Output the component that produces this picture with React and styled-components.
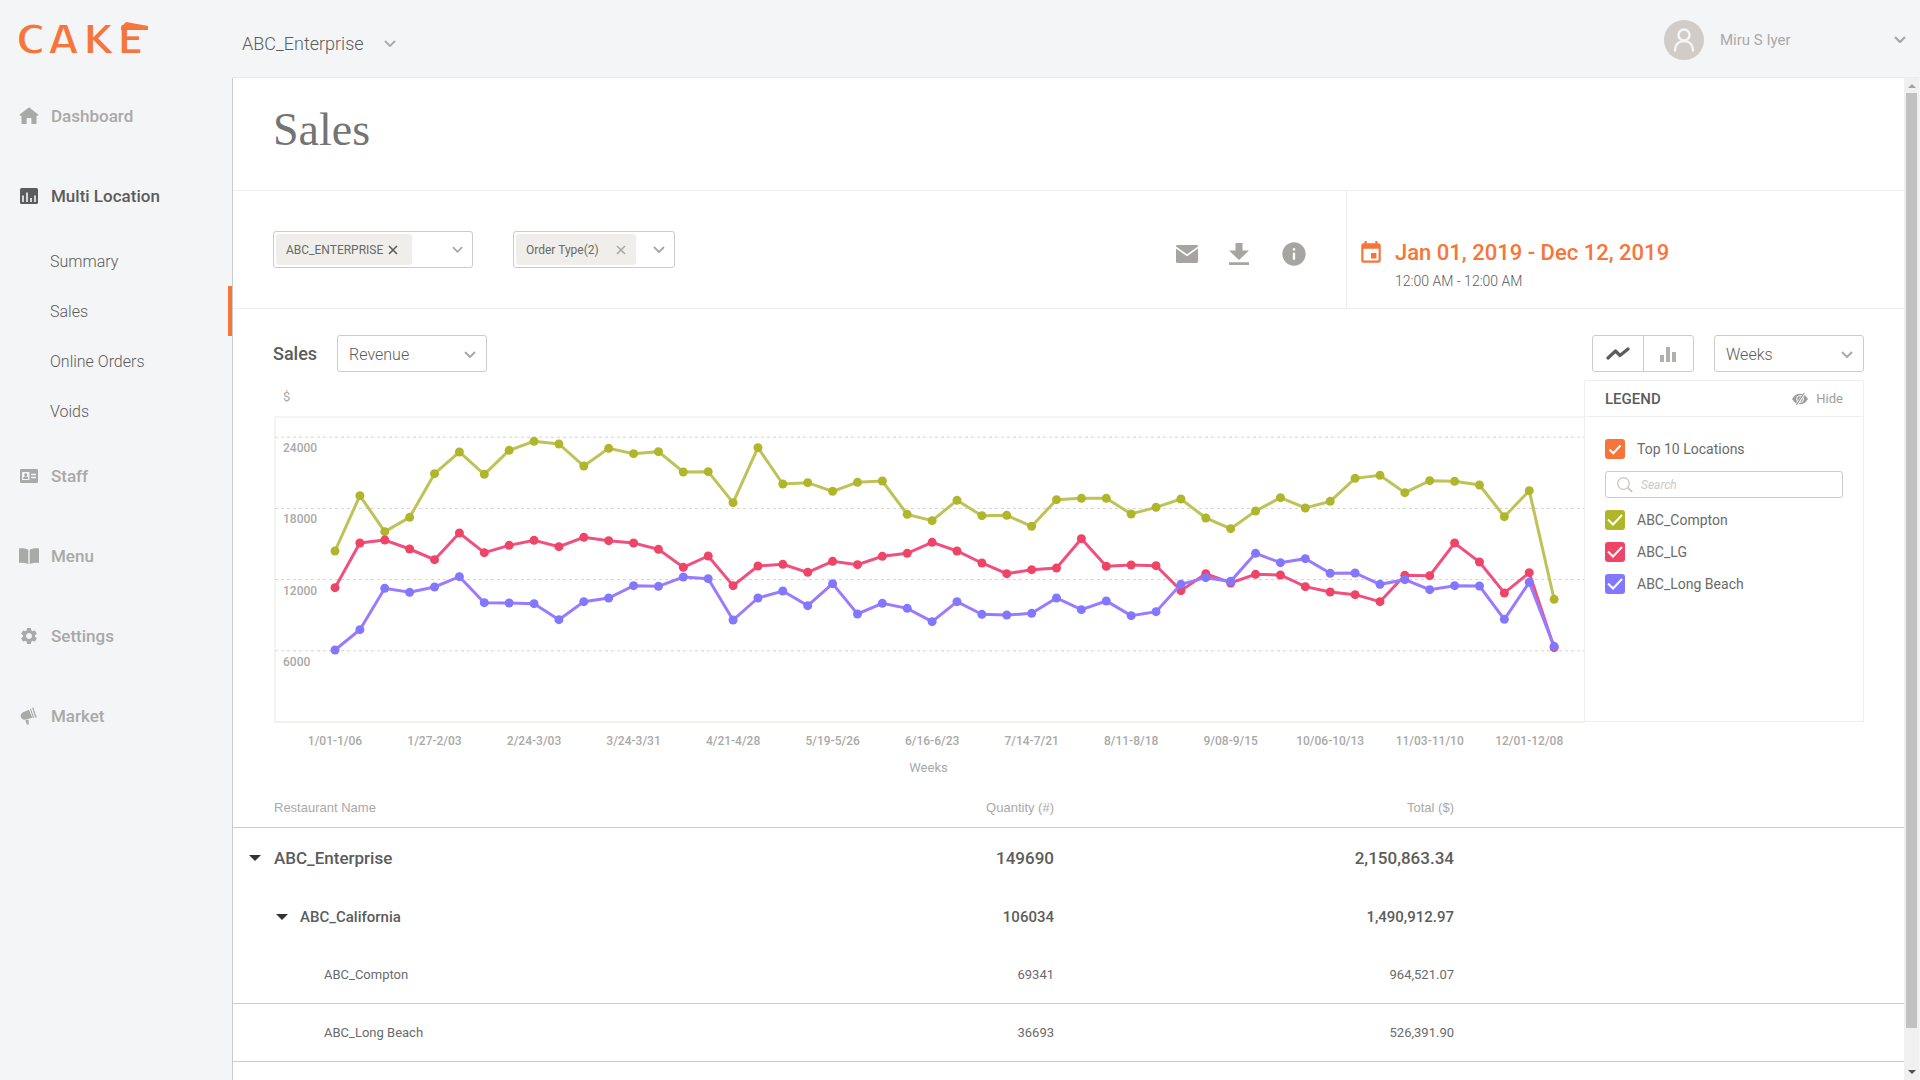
import React from "react";
import styled, { createGlobalStyle } from "styled-components";
import { MdEvent, MdInfo, MdSettings } from "react-icons/md";

const color = {
  orange: "#f7743a",
  canvas: "#f3f5f7",
  ink: "#5c5c5c",
  text: "#6a6a6a",
  muted: "#a9a9a7",
  line: "#eeeeec",
  rule: "#cccccc",
  control: "#cfcbc8",
  tag: "#efeeea",
  olive: "#b0b62c",
  pink: "#ee4566",
  violet: "#8278ff",
};

const GlobalStyle = createGlobalStyle`
  *, *::before, *::after { box-sizing: border-box; }
  body {
    margin: 0;
    background: ${color.canvas};
    color: ${color.text};
    font-family: Roboto, "Liberation Sans", sans-serif;
    font-size: 14px;
  }
  button, input, select { font: inherit; color: inherit; }
  button { border: 0; padding: 0; background: none; cursor: pointer; }
  svg { display: block; flex: none; }
`;

/* ---------- shell ---------- */

const Shell = styled.div`
  display: grid;
  grid-template-columns: 232px minmax(0, 1fr);
  height: 100vh;
  overflow: hidden;
`;

const Sidebar = styled.aside`
  display: flex;
  flex-direction: column;
`;

const LogoLink = styled.a`
  display: block;
  height: 76px;
  padding: 18px 0 0 16px;
`;

const Column = styled.div`
  display: flex;
  flex-direction: column;
  min-width: 0;
  min-height: 0;
`;

const TopBar = styled.header`
  display: flex;
  justify-content: space-between;
  flex: none;
  height: 78px;
  border-bottom: 1px solid #e9ebec;
`;

const AccountButton = styled.button`
  display: flex;
  align-items: center;
  gap: 20px;
  margin: 10px 0 0 10px;
  font-size: 18px;
  font-weight: 300;
  color: ${color.ink};
`;

const UserButton = styled.button`
  display: flex;
  align-items: center;
  gap: 16px;
  width: 256px;
  padding: 2px 14px 0 0;
  font-size: 15px;
  color: ${color.muted};

  & > svg:last-child { margin-left: auto; }
`;

const Viewport = styled.div`
  display: flex;
  flex: 1;
  min-height: 0;
  padding-right: 1px;
`;

const Content = styled.main`
  flex: 1;
  min-width: 0;
  overflow: hidden;
  background: #fff;
  border-left: 1px solid ${color.rule};
`;

const ScrollTrack = styled.div`
  display: flex;
  flex-direction: column;
  align-items: center;
  justify-content: space-between;
  width: 15px;
  padding: 6px 0;
  background: #f0f0f0;
`;

const ScrollThumb = styled.div`
  flex: 1;
  width: 11px;
  margin: 5px 0 42px;
  background: #c1c1c1;
`;

/* ---------- navigation ---------- */

const NavList = styled.ul`
  margin: 0;
  padding: 0;
  list-style: none;
`;

const NavLink = styled.a`
  display: flex;
  align-items: center;
  gap: 12px;
  height: 80px;
  padding-left: 19px;
  font-size: 17px;
  font-weight: 500;
  text-decoration: none;
  color: ${(p) => (p.$active ? color.ink : color.muted)};
`;

const SubLink = styled.a`
  display: flex;
  align-items: center;
  height: 50px;
  padding-left: 50px;
  border-right: 4px solid ${(p) => (p.$active ? color.orange : "transparent")};
  font-size: 16px;
  font-weight: 300;
  text-decoration: none;
  color: ${color.ink};
`;

/* ---------- page head ---------- */

const TitleBand = styled.div`
  height: 113px;
  padding: 25px 40px 0;
  border-bottom: 1px solid ${color.line};
`;

const PageTitle = styled.h1`
  margin: 0;
  font: 400 46px/54px "Liberation Serif", serif;
  color: #747474;
`;

const FilterBand = styled.div`
  display: flex;
  height: 118px;
  border-bottom: 1px solid ${color.line};
`;

const Filters = styled.div`
  display: flex;
  flex: 1;
  gap: 40px;
  padding: 40px 0 0 40px;
`;

const TagSelect = styled.div`
  display: flex;
  align-items: center;
  justify-content: space-between;
  width: ${(p) => p.$width}px;
  height: 37px;
  padding: 0 9px 0 2px;
  border: 1px solid ${color.control};
  border-radius: 3px;
`;

const Tag = styled.span`
  display: flex;
  align-items: center;
  justify-content: ${(p) => (p.$spread ? "space-between" : "flex-start")};
  gap: 5px;
  width: ${(p) => p.$width}px;
  height: 31px;
  padding: 0 10px;
  border-radius: 3px;
  background: ${color.tag};
  font-size: 12px;
`;

const Actions = styled.div`
  display: flex;
  align-items: center;
  gap: 30px;
  padding: 8px 38px 0 0;
  color: #a6a5a1;
`;

const DatePanel = styled.button`
  display: grid;
  grid-template-columns: 24px auto;
  align-content: start;
  justify-content: start;
  align-items: center;
  column-gap: 13px;
  width: 558px;
  padding: 47px 0 0 11px;
  border-left: 1px solid ${color.line};
  text-align: left;
`;

const DateRange = styled.span`
  font-size: 22px;
  font-weight: 500;
  line-height: 30px;
  color: ${color.orange};
`;

const TimeRange = styled.span`
  grid-column: 2;
  font-size: 14px;
  font-weight: 300;
  line-height: 26px;
  color: ${color.ink};
`;

/* ---------- chart ---------- */

const ChartSection = styled.section`
  padding: 26px 40px 0;
`;

const ChartBar = styled.div`
  display: flex;
  align-items: center;
  gap: 20px;
  height: 37px;
`;

const ChartTitle = styled.h2`
  margin: 0;
  font-size: 18px;
  font-weight: 500;
  color: ${color.ink};
`;

const SelectBox = styled.div`
  position: relative;
  width: 150px;

  svg {
    position: absolute;
    top: 16px;
    right: 11px;
    pointer-events: none;
  }
`;

const Select = styled.select`
  display: block;
  width: 100%;
  height: 37px;
  padding: 1px 32px 0 11px;
  border: 1px solid ${color.control};
  border-radius: 3px;
  background: #fff;
  font-size: 16px;
  font-weight: 300;
  color: ${color.ink};
  appearance: none;
`;

const ToggleGroup = styled.div`
  display: flex;
  width: 102px;
  height: 37px;
  margin-left: auto;
  border: 1px solid ${color.control};
  border-radius: 3px;
`;

const Toggle = styled.button`
  display: flex;
  flex: 1;
  align-items: center;
  justify-content: center;
  color: ${(p) => (p.$active ? color.ink : "#b0b0ae")};

  & + & { border-left: 1px solid ${color.control}; }
`;

const ChartBody = styled.div`
  display: grid;
  grid-template-columns: minmax(0, 1fr) 280px;
  align-items: start;
  padding-top: 8px;
`;

const Unit = styled.div`
  padding-left: 10px;
  font-size: 13px;
  line-height: 34px;
  height: 36px;
  color: ${color.muted};
`;

const Plot = styled.svg`
  width: 100%;
  height: auto;

  text {
    font-size: 12px;
    font-weight: 500;
    fill: ${color.muted};
  }
`;

const AxisTitle = styled.div`
  font-size: 13px;
  line-height: 24px;
  text-align: center;
  color: ${color.muted};
`;

const Legend = styled.aside`
  min-height: 342px;
  border: 1px solid ${color.line};
`;

const LegendHead = styled.div`
  display: flex;
  align-items: center;
  justify-content: space-between;
  height: 36px;
  padding: 0 20px;
  border-bottom: 1px solid ${color.line};
`;

const LegendTitle = styled.h3`
  margin: 0;
  font-size: 15px;
  font-weight: 500;
  color: ${color.ink};
`;

const HideButton = styled.button`
  display: flex;
  align-items: center;
  gap: 8px;
  font-size: 13px;
  color: #9d9d9b;
`;

const LegendBody = styled.div`
  display: flex;
  flex-direction: column;
  gap: 12px;
  padding: 22px 20px;
`;

const CheckLabel = styled.label`
  position: relative;
  display: flex;
  align-items: center;
  gap: 12px;
  height: 20px;
  font-size: 14px;

  svg {
    position: absolute;
    left: 0;
    pointer-events: none;
  }
`;

const CheckInput = styled.input`
  width: 20px;
  height: 20px;
  margin: 0;
  border-radius: 3px;
  background: ${(p) => p.$tint};
  appearance: none;
`;

const SearchBox = styled.label`
  display: flex;
  align-items: center;
  gap: 8px;
  height: 27px;
  padding-left: 11px;
  border: 1px solid ${color.control};
  border-radius: 3px;
`;

const SearchInput = styled.input`
  flex: 1;
  min-width: 0;
  padding: 0;
  border: 0;
  outline: 0;
  background: none;
  font-size: 12px;

  &::placeholder { font-style: italic; color: #cdc9c6; opacity: 1; }
`;

/* ---------- table ---------- */

const Table = styled.table`
  width: 100%;
  margin-top: 8px;
  border-collapse: separate;
  border-spacing: 0;
  table-layout: fixed;
`;

const HeadCell = styled.th`
  width: ${(p) => (p.$width ? `${p.$width}px` : "auto")};
  height: 40px;
  padding: ${(p) => (p.$numeric ? 0 : "0 0 0 41px")};
  border-bottom: 1px solid ${color.rule};
  font: 400 13px "Liberation Sans", sans-serif;
  text-align: ${(p) => (p.$numeric ? "right" : "left")};
  color: ${color.muted};
`;

const rowFont = [
  { size: 17, weight: 500, height: 59, inset: 16 },
  { size: 15, weight: 500, height: 59, inset: 43 },
  { size: 13, weight: 400, height: 58, inset: 91 },
];

const Cell = styled.td`
  height: ${(p) => rowFont[p.$level].height}px;
  padding: 0;
  border-bottom: ${(p) => (p.$level === 2 ? `1px solid ${color.rule}` : 0)};
  font-size: ${(p) => rowFont[p.$level].size}px;
  font-weight: ${(p) => rowFont[p.$level].weight};
  text-align: right;
  color: ${(p) => (p.$level === 2 ? color.text : color.ink)};
`;

const NameCell = styled(Cell)`
  padding-left: ${(p) => rowFont[p.$level].inset}px;
  text-align: left;
`;

const Expander = styled.button`
  display: flex;
  align-items: center;
  gap: ${(p) => (p.$level === 0 ? 13 : 12)}px;
`;

const IconButton = styled.button`
  display: flex;
  align-items: center;
`;

/* ---------- icons ---------- */

const Chevron = ({ stroke = 2, width = 12 }) => (
  <svg width={width} height="7" viewBox="0 0 12 7" fill="none" stroke={color.muted} strokeWidth={stroke}>
    <path d="M1 1l5 5 5-5" />
  </svg>
);

const Cross = ({ tint, size }) => (
  <svg width={size} height={size} viewBox="0 0 10 10" stroke={tint} strokeWidth="1.6">
    <path d="M1 1l8 8M9 1l-8 8" />
  </svg>
);

const Caret = ({ tint = "#333", up = false, width = 12 }) => (
  <svg width={width} height={width / 2} viewBox="0 0 12 6" fill={tint}>
    <path d={up ? "M0 6L6 0l6 6z" : "M0 0h12L6 6z"} />
  </svg>
);

const Logo = () => (
  <svg width="140" height="44" viewBox="0 0 140 44" role="img" aria-label="CAKE" fill={color.orange}>
    <text
      x="0 32 67 101"
      y="36"
      fontFamily="DejaVu Sans, sans-serif"
      fontWeight="700"
      fontSize="40"
      stroke={color.canvas}
      strokeWidth="2"
    >
      CAKE
    </text>
    <path d="M105 9l5-5 22 4v4h-27z" />
  </svg>
);

const HomeIcon = () => (
  <svg width="20" height="20" viewBox="0 0 20 20" fill="currentColor">
    <path d="M10 1.2L.8 8.6c-.5.5-.2 1.2.5 1.2h1.2v7.4c0 .6.3.9.9.9h4.2v-5.3c0-.5.3-.8.8-.8h3.200c.5 0 .8.3.8.8v5.300h4.200c.6 0 .9-.3.9-.9V9.800h1.200c.7 0 1-.7.5-1.200z" />
  </svg>
);

const ReportIcon = () => (
  <svg width="20" height="20" viewBox="0 0 20 20">
    <rect x="1" y="2" width="18" height="16" rx="1.500" fill="currentColor" />
    <path d="M4 9.500V16M8 6.500V16M12 12v4M16 9.500V16" stroke={color.canvas} strokeWidth="1.600" />
  </svg>
);

const StaffIcon = () => (
  <svg width="20" height="20" viewBox="0 0 20 20">
    <rect x="1" y="3" width="18" height="14" rx="1" fill="currentColor" />
    <rect x="3" y="6" width="7.500" height="8" fill={color.canvas} />
    <circle cx="6.700" cy="8.800" r="1.500" fill="currentColor" />
    <path d="M4 13c0-2 1.200-2.400 2.700-2.400S9.400 11 9.400 13z" fill="currentColor" />
    <path d="M12 8.500h5M12 11.500h5" stroke={color.canvas} strokeWidth="1.400" />
  </svg>
);

const MenuIcon = () => (
  <svg width="20" height="20" viewBox="0 0 20 20" fill="currentColor">
    <path d="M0 2.500c3-.4 6-.2 9.300 1.200V18C6 16.900 3 16.700 0 17zM20 2.500c-3-.4-6-.2-9.300 1.200V18c3.300-1.100 6.300-1.300 9.300-1z" />
  </svg>
);

const MarketIcon = () => (
  <svg width="20" height="20" viewBox="0 0 20 20" fill="currentColor">
    <path d="M10 3.800L4.600 6C2 7 1.200 9.100 2 11.300c.8 2.100 2.600 2.900 5 2.100l6.300-1.700z" />
    <path d="M11 3.200l1-.5 3.200 9-1.200.2zM13.200 2l1-.8 3.600 10.400-1.500-.2z" />
    <path d="M6.300 14.400l3.200-.8.4 4.600-1.900.5z" />
  </svg>
);

const MailIcon = () => (
  <svg width="22" height="18" viewBox="0 0 22 18" fill="currentColor">
    <path d="M1.500 0h19c.8 0 1.500.6 1.500 1.400L11 9.200 0 1.400C0 .6.700 0 1.500 0z" />
    <path d="M0 3.600l11 7.700 11-7.700v12.900c0 .8-.7 1.500-1.500 1.500h-19C.7 18 0 17.300 0 16.500z" />
  </svg>
);

const DownloadIcon = () => (
  <svg width="22" height="22" viewBox="-1 0 22 22" fill="currentColor">
    <path d="M6.500 0h7v7.500H20L10 17 0 7.500h6.500zM0 19.200h20V22H0z" />
  </svg>
);

const LineIcon = () => (
  <svg width="24" height="13" viewBox="0 0 24 13" fill="none" stroke="currentColor" strokeWidth="3.200" strokeLinejoin="round" strokeLinecap="round">
    <path d="M2 11l7.500-7L14 8.500 22 2" />
  </svg>
);

const BarsIcon = () => (
  <svg width="16" height="16" viewBox="0 0 16 16" fill="currentColor">
    <path d="M0 9h4v7H0zM6 1h4v15H6zM12 6h4v10h-4z" />
  </svg>
);

const HideIcon = () => (
  <svg width="16" height="12" viewBox="0 0 16 12">
    <path d="M0 6c2-3.600 4.800-5.300 8-5.300S14 2.400 16 6c-2 3.600-4.800 5.300-8 5.300S2 9.600 0 6z" fill="currentColor" />
    <circle cx="8" cy="6" r="3.400" fill="none" stroke="#fff" strokeWidth="1" />
    <path d="M12.500 0L4.500 12" stroke="#fff" strokeWidth="2.600" />
    <path d="M12.200 0L4.200 12" stroke="currentColor" strokeWidth="1.300" />
  </svg>
);

const SearchIcon = () => (
  <svg width="16" height="16" viewBox="0 0 16 16" fill="none" stroke="#c9c5c2" strokeWidth="1.300">
    <circle cx="6.500" cy="6.500" r="5.800" />
    <path d="M10.800 10.800l4.400 4" strokeWidth="1.800" />
  </svg>
);

const CheckMark = ({ small }) => (
  <svg width="20" height="20" viewBox="0 0 20 20" fill="none" stroke="#fff" strokeWidth="2">
    <path d={small ? "M4.500 10.500l3.800 3.800L15.500 6.500" : "M3 9.500l5 5L17 5"} />
  </svg>
);

const Avatar = () => (
  <svg width="40" height="40" viewBox="0 0 40 40" fill="none" stroke={color.canvas} strokeWidth="2.400" strokeLinecap="round">
    <circle cx="20" cy="20" r="20" fill="#d2ccc8" stroke="none" />
    <circle cx="20" cy="15" r="5.500" />
    <path d="M11 30.500c0-6 4-9.500 9-9.500s9 3.500 9 9.500" />
  </svg>
);

/* ---------- data ---------- */

// Point heights above the zero line, three units to one plot pixel.
const SERIES = [
  {
    name: "ABC_Compton",
    tint: color.olive,
    line: "#bec257",
    points: [513, 679, 571, 614, 745, 810, 743, 815, 842, 834, 768, 821, 805, 811, 750, 751, 658, 823, 714, 718, 692, 719, 723, 623, 604, 665, 619, 620, 587, 667, 671, 671, 624, 644, 669, 612, 580, 633, 673, 642, 662, 731, 740, 688, 724, 722, 711, 616, 694, 368],
  },
  {
    name: "ABC_LG",
    tint: color.pink,
    line: "#f0507f",
    points: [403, 537, 546, 519, 487, 567, 508, 530, 545, 526, 554, 544, 537, 518, 464, 498, 409, 468, 473, 449, 482, 472, 497, 506, 539, 513, 477, 445, 457, 462, 550, 467, 471, 469, 394, 445, 417, 443, 441, 406, 390, 382, 361, 440, 439, 537, 480, 387, 448, 223],
  },
  {
    name: "ABC_Long Beach",
    tint: color.violet,
    line: "#9a7bff",
    points: [216, 277, 401, 389, 405, 436, 358, 357, 355, 307, 361, 372, 409, 407, 435, 430, 306, 372, 393, 349, 415, 324, 356, 341, 301, 361, 323, 321, 326, 372, 337, 363, 319, 331, 413, 433, 422, 506, 478, 490, 446, 447, 413, 427, 397, 409, 408, 308, 419, 227],
  },
];

const WEEKS = [
  "1/01-1/06", "1/27-2/03", "2/24-3/03", "3/24-3/31", "4/21-4/28", "5/19-5/26", "6/16-6/23",
  "7/14-7/21", "8/11-8/18", "9/08-9/15", "10/06-10/13", "11/03-11/10", "12/01-12/08",
];

const GRID = [24000, 18000, 12000, 6000];

const BASE = 306;
const px = (i) => 62 + i * 24.88;
const py = (h) => BASE - h / 3;
const gridY = (v) => BASE - (v / 6000) * 71.200;

const ROWS = [
  { name: "ABC_Enterprise", quantity: "149690", total: "2,150,863.34", level: 0 },
  { name: "ABC_California", quantity: "106034", total: "1,490,912.97", level: 1 },
  { name: "ABC_Compton", quantity: "69341", total: "964,521.07", level: 2 },
  { name: "ABC_Long Beach", quantity: "36693", total: "526,391.90", level: 2 },
];

const MAIN_NAV = [
  { label: "Dashboard", icon: <HomeIcon /> },
  { label: "Multi Location", icon: <ReportIcon />, children: ["Summary", "Sales", "Online Orders", "Voids"] },
  { label: "Staff", icon: <StaffIcon /> },
  { label: "Menu", icon: <MenuIcon /> },
  { label: "Settings", icon: <MdSettings size={20} /> },
  { label: "Market", icon: <MarketIcon /> },
];

/* ---------- parts ---------- */

const SalesPlot = () => (
  <Plot viewBox="0 0 1311 340" role="img" aria-label="Weekly revenue by location">
    <path d={`M2 ${BASE}V1H1311`} fill="none" stroke="#f4f4f2" strokeWidth="2" />
    <path d={`M1 ${BASE}H1311`} stroke="#f2f2ec" strokeWidth="2" />
    {GRID.map((v) => (
      <g key={v}>
        <path d={`M2 ${gridY(v)}H1311`} stroke="#d4d4d4" strokeDasharray="3 3" />
        <text x="10" y={gridY(v) + 15}>{v}</text>
      </g>
    ))}
    {SERIES.map((s) => (
      <g key={s.name}>
        <polyline
          points={s.points.map((h, i) => `${px(i)},${py(h)}`).join(" ")}
          fill="none"
          stroke={s.line}
          strokeWidth="3"
        />
        {s.points.map((h, i) => (
          <circle key={i} cx={px(i)} cy={py(h)} r="4.500" fill={s.tint} />
        ))}
      </g>
    ))}
    {WEEKS.map((w, i) => (
      <text key={w} x={px(i * 4)} y="329" textAnchor="middle">{w}</text>
    ))}
  </Plot>
);

const Dropdown = ({ label, options }) => (
  <SelectBox>
    <Select aria-label={label}>
      {options.map((o) => <option key={o}>{o}</option>)}
    </Select>
    <Chevron />
  </SelectBox>
);

const Check = ({ label, tint, small }) => (
  <CheckLabel>
    <CheckInput type="checkbox" defaultChecked $tint={tint} />
    <CheckMark small={small} />
    {label}
  </CheckLabel>
);

export default function App() {
  return (
    <>
      <GlobalStyle />
      <Shell>
        <Sidebar>
          <LogoLink href="#home"><Logo /></LogoLink>
          <nav>
            <NavList>
              {MAIN_NAV.map((item) => (
                <li key={item.label}>
                  <NavLink href="#nav" $active={!!item.children}>
                    {item.icon}
                    {item.label}
                  </NavLink>
                  {item.children && (
                    <NavList>
                      {item.children.map((c) => (
                        <li key={c}><SubLink href="#sub" $active={c === "Sales"}>{c}</SubLink></li>
                      ))}
                    </NavList>
                  )}
                </li>
              ))}
            </NavList>
          </nav>
        </Sidebar>

        <Column>
          <TopBar>
            <AccountButton>
              ABC_Enterprise
              <Chevron stroke={1.800} />
            </AccountButton>
            <UserButton>
              <Avatar />
              Miru S Iyer
              <Chevron stroke={2.400} />
            </UserButton>
          </TopBar>

          <Viewport>
            <Content>
              <TitleBand>
                <PageTitle>Sales</PageTitle>
              </TitleBand>

              <FilterBand>
                <Filters>
                  <TagSelect $width={200}>
                    <Tag $width={136}>
                      ABC_ENTERPRISE
                      <IconButton aria-label="Remove location"><Cross tint="#5c5c5c" size={10} /></IconButton>
                    </Tag>
                    <IconButton aria-label="Choose location"><Chevron width={11} /></IconButton>
                  </TagSelect>
                  <TagSelect $width={162}>
                    <Tag $width={120} $spread>
                      Order Type(2)
                      <IconButton aria-label="Clear order types"><Cross tint="#a9a9a7" size={10} /></IconButton>
                    </Tag>
                    <IconButton aria-label="Choose order types"><Chevron /></IconButton>
                  </TagSelect>
                </Filters>
                <Actions>
                  <IconButton aria-label="Email"><MailIcon /></IconButton>
                  <IconButton aria-label="Download"><DownloadIcon /></IconButton>
                  <IconButton aria-label="Information"><MdInfo size={28} /></IconButton>
                </Actions>
                <DatePanel>
                  <MdEvent size={26} color={color.orange} />
                  <DateRange>Jan 01, 2019 - Dec 12, 2019</DateRange>
                  <TimeRange>12:00 AM - 12:00 AM</TimeRange>
                </DatePanel>
              </FilterBand>

              <ChartSection>
                <ChartBar>
                  <ChartTitle>Sales</ChartTitle>
                  <Dropdown label="Measure" options={["Revenue", "Quantity"]} />
                  <ToggleGroup>
                    <Toggle $active aria-label="Line chart"><LineIcon /></Toggle>
                    <Toggle aria-label="Bar chart"><BarsIcon /></Toggle>
                  </ToggleGroup>
                  <Dropdown label="Period" options={["Weeks", "Months"]} />
                </ChartBar>

                <ChartBody>
                  <div>
                    <Unit>$</Unit>
                    <SalesPlot />
                    <AxisTitle>Weeks</AxisTitle>
                  </div>
                  <Legend>
                    <LegendHead>
                      <LegendTitle>LEGEND</LegendTitle>
                      <HideButton><HideIcon />Hide</HideButton>
                    </LegendHead>
                    <LegendBody>
                      <Check label="Top 10 Locations" tint={color.orange} small />
                      <SearchBox>
                        <SearchIcon />
                        <SearchInput type="search" placeholder="Search" aria-label="Search locations" />
                      </SearchBox>
                      {SERIES.map((s) => <Check key={s.name} label={s.name} tint={s.tint} />)}
                    </LegendBody>
                  </Legend>
                </ChartBody>
              </ChartSection>

              <Table>
                <thead>
                  <tr>
                    <HeadCell $width={421}>Restaurant Name</HeadCell>
                    <HeadCell $width={400} $numeric>Quantity (#)</HeadCell>
                    <HeadCell $width={400} $numeric>Total ($)</HeadCell>
                    <HeadCell aria-hidden="true" />
                  </tr>
                </thead>
                <tbody>
                  {ROWS.map((r) => (
                    <tr key={r.name}>
                      <NameCell $level={r.level}>
                        {r.level < 2 ? (
                          <Expander $level={r.level}><Caret />{r.name}</Expander>
                        ) : r.name}
                      </NameCell>
                      <Cell $level={r.level}>{r.quantity}</Cell>
                      <Cell $level={r.level}>{r.total}</Cell>
                      <Cell $level={r.level} />
                    </tr>
                  ))}
                </tbody>
              </Table>
            </Content>
            <ScrollTrack aria-hidden="true">
              <Caret tint="#a3a3a3" up width={8} />
              <ScrollThumb />
              <Caret tint="#505050" width={8} />
            </ScrollTrack>
          </Viewport>
        </Column>
      </Shell>
    </>
  );
}
